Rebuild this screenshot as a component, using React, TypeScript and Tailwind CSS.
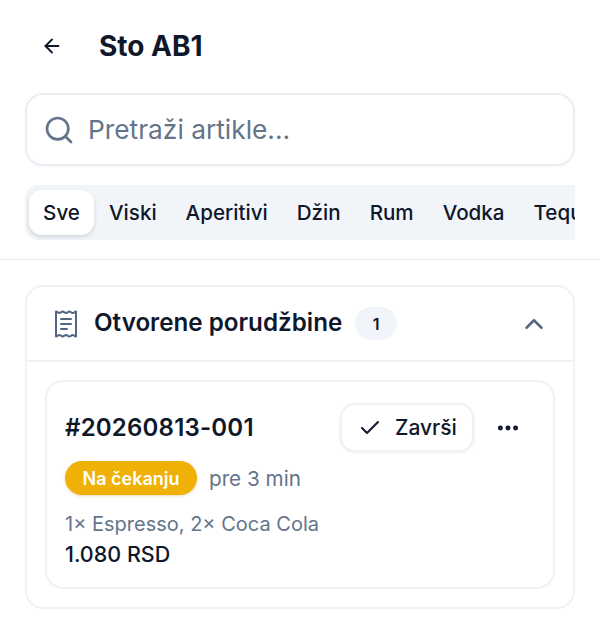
import { ArrowLeft, Search, ChevronUp, Check, Ellipsis } from "lucide-react";

const tabs = ["Viski", "Aperitivi", "Džin", "Rum", "Vodka", "Tequila"];

function Receipt() {
  return (
    <svg viewBox="0 0 24 30" className="w-[24px] h-[30px] shrink-0 ml-[4px] text-[#526581]" fill="none" stroke="currentColor" strokeWidth="2" strokeLinecap="round" strokeLinejoin="round">
      <path d="M2 2.5c1.7 0 1.7 1.5 3.3 1.5S7 2.5 8.7 2.5 10.3 4 12 4s1.7-1.5 3.3-1.5S17 4 18.7 4s1.7-1.5 3.3-1.5v25c-1.7 0-1.7-1.5-3.3-1.5s-1.7 1.5-3.4 1.5S13.7 26 12 26s-1.7 1.5-3.3 1.5S7 26 5.3 26s-1.7 1.5-3.3 1.5z" />
      <path d="M7 10h10M7 15h10M7 20h6" />
    </svg>
  );
}

export default function App() {
  return (
    <div className="w-[600px] h-[631px] overflow-hidden bg-white text-[#0f172a] font-['Inter',sans-serif]">
      <div className="h-[93px] flex items-center pl-[38px] pb-[1px]">
        <ArrowLeft className="w-[28px] h-[28px] shrink-0" strokeWidth={2} style={{ transform: "scale(0.8)" }} />
        <h1 className="ml-[33px] text-[28px] leading-[32px] font-bold">Sto AB1</h1>
      </div>
      <div className="mx-[25px] h-[73px] rounded-[18px] border-2 border-[#e9eef4] flex items-center pl-[16px] shadow-[0_1px_2px_rgba(15,23,42,0.04)]">
        <Search className="w-[32px] h-[32px] text-[#64748b] shrink-0" strokeWidth={2} />
        <span className="ml-[13px] pt-[1px] text-[26.3px] text-[#64748b]">Pretraži artikle...</span>
      </div>
      <div className="mx-[25px] mt-[19px] h-[55px] bg-[#f1f5f9] rounded-l-[14px] flex items-center pl-[4px] overflow-hidden whitespace-nowrap text-[20.6px] font-medium">
        <div className="h-[45px] w-[65px] shrink-0 rounded-[13px] bg-white flex items-center justify-center pt-[1px] shadow-[0_2px_4px_rgba(15,23,42,0.14)]">Sve</div>
        <div className="flex items-center gap-[29px] pl-[15px] pt-[1px]">
          {tabs.map((t) => (
            <span key={t}>{t}</span>
          ))}
        </div>
      </div>
      <div className="mt-[19px] h-[1px] bg-[#e2e8f0]" />
      <div className="mx-[25px] mt-[25px] h-[324px] rounded-[18px] border-2 border-[#eef2f6] flex flex-col">
        <div className="h-[75px] shrink-0 border-b-2 border-[#eef2f6] flex items-center pl-[23px] pr-[24px]">
          <Receipt />
          <span className="ml-[16px] text-[24.2px] font-semibold">Otvorene porudžbine</span>
          <span className="ml-[13px] w-[42px] h-[33px] rounded-full bg-[#f1f5f9] flex items-center justify-center text-[16px] font-semibold">1</span>
          <ChevronUp className="ml-auto w-[30px] h-[30px] text-[#526581]" strokeWidth={2} />
        </div>
        <div className="mx-[18px] mt-[18px] h-[209px] rounded-[18px] border-2 border-[#eef2f6] pl-[18px] pr-[32px] flex flex-col">
          <div className="mt-[21px] flex items-center h-[49px]">
            <span className="text-[24px] font-semibold tracking-[0.2px]">#20260813-001</span>
            <div className="ml-auto w-[134px] h-[49px] rounded-[15px] border-2 border-[#eef2f6] bg-white flex items-center pl-[16px] shadow-[0_1px_3px_rgba(15,23,42,0.08)]">
              <Check className="w-[24px] h-[24px] shrink-0" strokeWidth={2} />
              <span className="ml-[13px] text-[21px] font-medium">Završi</span>
            </div>
            <Ellipsis className="ml-[21px] w-[26px] h-[26px]" strokeWidth={2.6} />
          </div>
          <div className="mt-[9px] flex items-center">
            <span className="h-[34px] w-[132px] rounded-full bg-[#efb106] text-white text-[18px] font-semibold flex items-center justify-center shadow-[0_1px_3px_rgba(180,130,0,0.3)]">Na čekanju</span>
            <span className="ml-[12px] pt-[1px] text-[20.7px] text-[#64748b]">pre 3 min</span>
          </div>
          <div className="mt-[15px] text-[20px] leading-[28px] text-[#64748b]">1× Espresso, 2× Coca Cola</div>
          <div className="mt-[2px] text-[21.5px] leading-[28px] font-medium">1.080 RSD</div>
        </div>
      </div>
    </div>
  );
}
